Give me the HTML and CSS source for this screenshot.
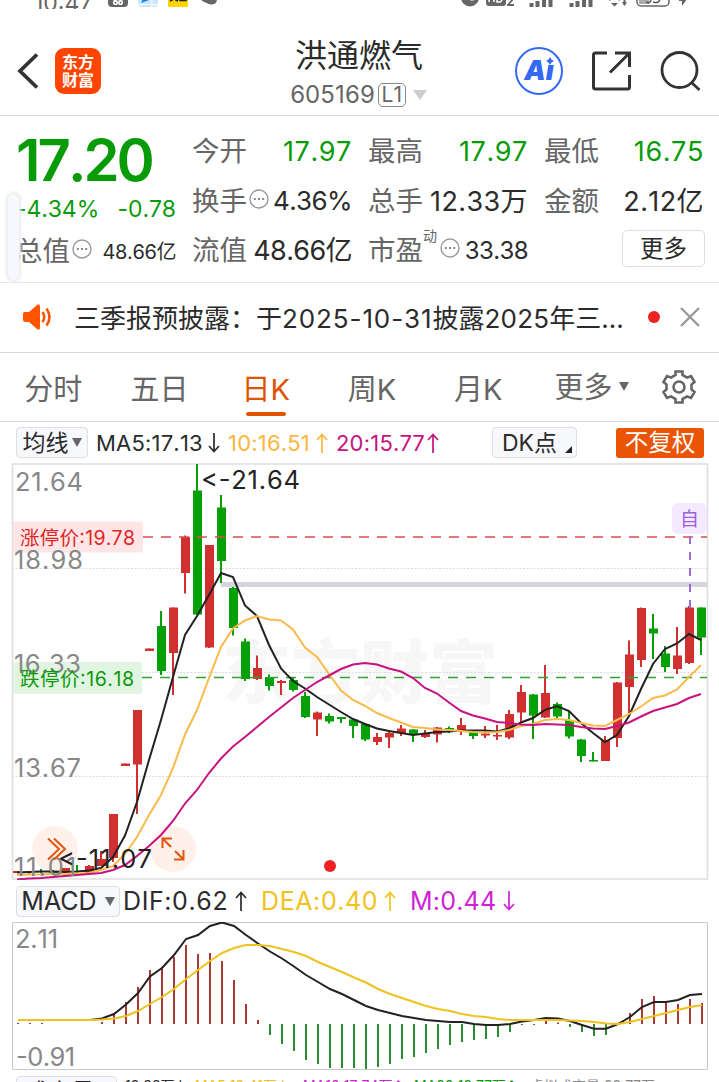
FILE: index.html
```html
<!DOCTYPE html>
<html lang="zh-CN">
  <head>
    <meta charset="UTF-8" />
    <meta name="viewport" content="width=device-width, initial-scale=1.0" />
    <title>洪通燃气 605169</title>
    <link rel="stylesheet" href="styles.css">
  </head>
  <body>
    <!-- Status bar -->
    <div class="status-bar">
      <span class="clock">10:47</span>
      <svg class="status-left" width="112" height="10" viewBox="0 0 112 10">
        <rect x="0" y="-12" width="20" height="20" rx="4" fill="#666" />
        <path d="M5 0l4 3M15 0l-4 3" stroke="#fff" stroke-width="1.500" />
        <circle cx="7.500" cy="3.500" r="1.800" fill="none" stroke="#fff" stroke-width="1.500" />
        <circle cx="12.500" cy="3.500" r="1.800" fill="none" stroke="#fff" stroke-width="1.500" />
        <rect x="30" y="-12" width="20" height="20" rx="4" fill="#cfe6fa" />
        <path d="M33 4L44 0h-9z" fill="#0a84ff" />
        <path d="M30 5.500h20M44 0v8" stroke="#fff" />
        <rect x="60" y="-12" width="20" height="20" rx="1" fill="#ffd500" />
        <path d="M62 2l4-2 4 2M72 0v1.500h6V0" fill="none" stroke="#222" stroke-width="1.500" />
        <path d="M94 0h7v5l-7-3zM97 0h12q0 5-5 5.500q-6 0-7-5.500" fill="#666" />
      </svg>
      <svg class="status-right" width="230" height="10" viewBox="0 0 230 10">
        <circle cx="10" cy="-1.500" r="9" fill="#666" />
        <path d="M10 0h4v1.500h-4z" fill="#fff" />
        <rect x="26" y="-10" width="20" height="17" rx="3" fill="#666" />
        <path d="M29 0v3M34 0v3M37 0v3h3q2-1 2-3" stroke="#fff" stroke-width="1.500" fill="none" />
        <path d="M47 6h7M53 0l-5 6" stroke="#666" stroke-width="1.800" />
        <path d="M71.500 4v4M77.500 2v6M84 0v8M90.500 0v8M111.500 4v4M117.500 2v6M124 0v8M130.500 0v8" stroke="#666" stroke-width="4" />
        <path d="M149 1q5.500-3.500 11 0M164.500 0v6" stroke="#666" stroke-width="2" fill="none" />
        <path d="M151 4h7l-3.500 3.500zM162 3h5l-2.500 4z" fill="#666" />
        <rect x="177" y="-10" width="32" height="17" rx="4" fill="none" stroke="#666" stroke-width="1.500" />
        <path d="M179 0h10v5h-10z" fill="#aaa" />
        <path d="M186 3q4 2 5-2M193 3q6 2 7-3M211 0v1" fill="none" stroke="#555" stroke-width="1.500" />
        <path d="M219 0h8l-5 7v-5h-3z" fill="#666" />
      </svg>
    </div>

    <!-- Title bar -->
    <header class="title-bar">
      <div class="title-left">
        <svg width="24" height="38" viewBox="0 0 24 38">
          <path d="M22 2.500L5 19l17 16.500" fill="none" stroke="#333" stroke-width="3.800" />
        </svg>
        <div class="logo"><span>东方</span><span>财富</span></div>
      </div>
      <div class="stock">
        <h1>洪通燃气</h1>
        <div class="stock-code">605169<span class="level">L1</span><i class="caret"></i></div>
      </div>
      <div class="title-icons">
        <div class="ai">A<i>ı</i><svg width="8" height="8" viewBox="0 0 8 8"><path d="M4 0L5.500 2.500 8 4 5.500 5.500 4 8 2.500 5.500 0 4 2.500 2.500z" fill="#3468f5" /></svg></div>
        <svg width="40" height="40" viewBox="0 0 40 40" fill="none" stroke="#333" stroke-width="3">
          <path d="M16 2H4.500Q2.500 2 2.500 4v32q0 2 2 2h32q2 0 2-2V24M24 2h14.500v14M38 2.500L19 21.500" />
        </svg>
        <svg width="42" height="42" viewBox="0 0 42 42" fill="none" stroke="#333" stroke-width="2.800">
          <circle cx="20.500" cy="20" r="17.500" />
          <path d="M32 32L40.500 40" />
        </svg>
      </div>
    </header>

    <!-- Quote -->
    <section class="quote">
      <div class="quote-main">
        <div class="price">17.20</div>
        <div class="change"><span>-4.34%</span><span>-0.78</span></div>
        <div class="cell total"><label>总值</label><svg class="dots"><use href="#dots" /></svg><b class="small">48.66亿</b></div>
      </div>
      <div class="quote-grid">
        <div class="cell"><label>今开</label><b class="green wide">17.97</b></div>
        <div class="cell"><label>最高</label><b class="green wide">17.97</b></div>
        <div class="cell"><label>最低</label><b class="green wide">16.75</b></div>
        <div class="cell"><label>换手</label><svg class="dots"><use href="#dots" /></svg><b class="rate">4.36%</b></div>
        <div class="cell"><label>总手</label><b class="unit">12.33万</b></div>
        <div class="cell"><label>金额</label><b class="unit">2.12亿</b></div>
        <div class="cell"><label>流值</label><b class="unit tight">48.66亿</b></div>
        <div class="cell"><label>市盈<sup>动</sup></label><svg class="dots"><use href="#dots" /></svg><b class="pe">33.38</b></div>
        <div class="cell"><button class="more">更多</button></div>
      </div>
      <div class="side-handle"></div>
    </section>

    <!-- Notice -->
    <section class="notice">
      <svg width="32" height="26" viewBox="0 0 32 26">
        <path d="M1 10q0-2 2-2h4l8-7q3-2 3 2v20q0 4-3 2l-8-7H3q-2 0-2-2z" fill="#ff5500" />
        <path d="M20.500 8q3.500 5 0 10M24.500 4.500q6 8.500 0 17" fill="none" stroke="#ff5500" stroke-width="2.600" />
      </svg>
      <p>三季报预披露：于<span class="date">2025-10-31</span>披露<span class="year">2025</span>年三<span class="more-dots">...</span></p>
      <i class="red-dot"></i>
      <svg class="close" width="20" height="20" viewBox="0 0 20 20">
        <path d="M1 1l18 18M19 1L1 19" stroke="#999" stroke-width="2.400" />
      </svg>
    </section>

    <!-- Period tabs -->
    <nav class="tabs">
      <a>分时</a>
      <a>五日</a>
      <a class="active">日K</a>
      <a>周K</a>
      <a>月K</a>
      <a class="tab-more">更多<i class="caret"></i></a>
      <svg class="gear" width="36" height="36" viewBox="0 0 36 36" fill="none" stroke="#666" stroke-width="2.600">
        <path d="M14.500 2.500h7v3.500l4.500 2.600 4-1.600 3.500 6-3 2.500v5l3 2.500-3.500 6-4-1.600-4.500 2.600v3.500h-7v-3.500L10 27.400l-4 1.600-3.500-6 3-2.500v-5l-3-2.500 3.500-6 4 1.600 4.500-2.600z" />
        <circle cx="18" cy="18" r="5.500" />
      </svg>
    </nav>

    <!-- K line chart -->
    <div class="ma-bar">
      <button class="pill">均线<i class="caret"></i></button>
      <span class="ma5">MA5:17.13</span><svg class="arrow ma5"><use href="#down" /></svg>
      <span class="ma10">10:16.51</span><svg class="arrow ma10"><use href="#up" /></svg>
      <span class="ma20">20:15.77</span><svg class="arrow ma20"><use href="#up" /></svg>
      <button class="pill dk">DK点<i class="corner"></i></button>
      <button class="adjust">不复权</button>
    </div>
    <svg id="kline" width="719" height="417" viewBox="0 463 719 417">
      <text class="watermark" x="222" y="698">东方财富</text>
      <path d="M12 568.500H707M12 672.500H707M12 776.500H707" stroke="#dcdcdc" stroke-dasharray="2 1.500" />
      <path d="M221 584.500H707" stroke="#d3d6de" stroke-width="5" />
      <path d="M12.500 464H707.500V879H12.500z" fill="none" stroke="#dedede" stroke-width="1.600" />
      <circle class="float" cx="55" cy="849" r="23" />
      <circle class="float" cx="173" cy="849" r="23" />
      <path d="M13 521.500H140q3 0 3 3v25q0 3-3 3H13z" fill="#ffe5e5" />
      <path d="M13 662H139q3 0 3 3v26q0 3-3 3H13z" fill="#e2f4e2" />
      <g id="candles"></g>
      <path d="M143 537H707" stroke="#d94f4f" stroke-width="1.300" stroke-dasharray="10 8" />
      <path d="M142 677.500H707" stroke="#31a331" stroke-width="1.300" stroke-dasharray="10 8" />
      <g id="averages"></g>
      <g class="axis">
        <text x="15" y="491" textLength="68">21.64</text>
        <text x="14" y="569" textLength="69">18.98</text>
        <text x="14" y="673" textLength="67">16.33</text>
        <text x="14" y="777" textLength="67">13.67</text>
        <text x="14" y="876" textLength="62">11.01</text>
      </g>
      <text class="limit up" x="20" y="545" textLength="115">涨停价:19.78</text>
      <text class="limit down" x="20" y="686" textLength="114">跌停价:16.18</text>
      <text class="extreme" x="201" y="489" textLength="99">&lt;-21.64</text>
      <text class="extreme" x="58" y="868" textLength="94">&lt;-11.07</text>
      <path d="M48 838.500l11 10.500-11 10.500M54 838.500l11 10.500-11 10.500M172 838.500h-9.500v9.500M163 839l8 8M183.500 850v9.500H174M183 859l-8-8" fill="none" stroke="#e2550e" stroke-width="2" />
      <rect x="672" y="503" width="35" height="31" rx="6" fill="#f3eaff" />
      <text class="own" x="680" y="526">自</text>
      <path d="M690 536V608" stroke="#a06bd0" stroke-width="2" stroke-dasharray="8 8" />
      <circle cx="330" cy="866" r="6" fill="#ee2222" />
    </svg>

    <!-- MACD chart -->
    <div class="macd-bar">
      <button class="pill">MACD<i class="caret"></i></button>
      <span class="dif">DIF:0.62</span><svg class="arrow"><use href="#up" /></svg>
      <span class="dea">DEA:0.40</span><svg class="arrow dea"><use href="#up" /></svg>
      <span class="m">M:0.44</span><svg class="arrow m"><use href="#down" /></svg>
    </div>
    <svg id="macd" width="719" height="148" viewBox="0 922 719 148">
      <path d="M12.500 922.500H707.500V1069.500H12.500z" fill="none" stroke="#c8c8c8" />
      <g id="bars"></g>
      <g id="macdLines"></g>
      <g class="axis">
        <text x="15" y="948" textLength="43">2.11</text>
        <text x="16" y="1066" textLength="59">-0.91</text>
      </g>
    </svg>

    <!-- Volume header, cut by the bottom edge -->
    <div class="vol-bar">
      <button class="pill">成交量<i class="caret"></i></button>
      <span>12.33万↓</span>
      <span class="dea">MA5:13.41万↓</span>
      <span class="m">MA10:17.74万↑</span>
      <span class="green">MA20:12.77万↑</span>
      <span class="virtual">虚拟成交量:22.77万</span>
    </div>

    <!-- Shared icons -->
    <svg class="defs" width="0" height="0">
      <symbol id="dots" viewBox="0 0 20 20">
        <circle cx="10" cy="10" r="9" fill="none" stroke="#999" stroke-width="1.400" />
        <path d="M4.800 10h2M9 10h2M13.200 10h2" stroke="#888" stroke-width="2" />
      </symbol>
      <symbol id="up" viewBox="0 0 12 20">
        <path d="M6 20V1.500M1 7l5-5.500L11 7" fill="none" stroke="currentColor" stroke-width="1.700" />
      </symbol>
      <symbol id="down" viewBox="0 0 12 20">
        <path d="M6 0v18.500M1 13l5 5.500 5-5.500" fill="none" stroke="currentColor" stroke-width="1.700" />
      </symbol>
    </svg>

    <script src="chart.js"></script>
  </body>
</html>
```
FILE: styles.css
```css
* {
  box-sizing: border-box;
}

body {
  margin: 0;
  width: 719px;
  height: 1082px;
  overflow: hidden;
  background-color: #fff;
  color: #2b2b2b;
  font-family: Inter, "Noto Sans CJK SC", sans-serif;
  font-kerning: none;
}

svg {
  display: block;
  flex: none;
}

button {
  font-family: inherit;
  color: inherit;
  padding: 0;
  margin: 0;
}

.defs {
  position: absolute;
}

.green {
  color: #079c07;
}

.caret {
  display: inline-block;
  border: 5px solid transparent;
  border-top: 9px solid #666;
  border-bottom: 0;
}

/* Status bar */
.status-bar {
  height: 9px;
  padding-left: 34px;
  display: flex;
  align-items: flex-end;
  overflow: hidden;
}

.clock {
  width: 74px;
  flex: none;
  font-size: 23px;
  line-height: 24px;
  height: 22px;
  margin-bottom: -4px;
  color: #666;
}

.status-right {
  margin-left: 240px;
}

/* Title bar */
.title-bar {
  height: 107px;
  border-bottom: 1px solid #d8d8d8;
  display: grid;
  grid-template-columns: 1fr 240px 1fr;
  padding: 0 17px 0 15px;
  align-items: center;
}

.title-left {
  display: flex;
  align-items: center;
  gap: 16px;
  padding-top: 17px;
}

.logo {
  width: 46px;
  height: 46px;
  border-radius: 9px;
  background-color: #ff4400;
  color: #fff;
  font-size: 16px;
  font-weight: 700;
  line-height: 18px;
  display: flex;
  flex-direction: column;
  align-items: center;
  justify-content: center;
}

.stock {
  text-align: center;
  padding-top: 23px;
}

.stock h1 {
  margin: 0 0 0 1px;
  font-size: 32px;
  font-weight: 400;
  line-height: 42px;
}

.stock-code {
  display: flex;
  align-items: center;
  justify-content: center;
  font-size: 24px;
  line-height: 35px;
  letter-spacing: 0.1px;
  color: #666;
}

.level {
  border: 1.5px solid #888;
  border-radius: 5px;
  width: 28px;
  height: 24px;
  font-size: 21px;
  line-height: 22px;
  margin-left: 3px;
}

.stock-code .caret {
  border-width: 10px 7px 0;
  border-top-color: #ccc;
  margin-left: 7px;
}

.title-icons {
  display: flex;
  align-items: center;
  justify-content: flex-end;
  gap: 28px;
  padding: 17px 1px 0 0;
}

.ai {
  position: relative;
  width: 48px;
  height: 48px;
  border: 2px solid #3468f5;
  border-radius: 50%;
  text-align: center;
  font-size: 27px;
  line-height: 44px;
  font-weight: 900;
  font-style: italic;
  color: #3468f5;
  flex: none;
}

.ai svg {
  position: absolute;
  left: 29px;
  top: 8px;
}

/* Quote */
.quote {
  position: relative;
  height: 167px;
  border-bottom: 1px solid #e6e6e6;
  display: flex;
  gap: 17px;
  padding: 10px 15px 0 16px;
}

.quote-main {
  width: 160px;
}

.price {
  height: 67px;
  font-size: 58px;
  line-height: 68px;
  font-weight: 600;
  letter-spacing: -3px;
  color: #079c07;
}

.change {
  display: flex;
  justify-content: space-between;
  height: 33px;
  font-size: 23px;
  line-height: 33px;
  letter-spacing: -0.1px;
  color: #079c07;
}

.quote-grid {
  flex: 1;
  display: grid;
  grid-template-columns: repeat(3, 159px);
  column-gap: 17px;
  grid-auto-rows: 49.7px;
}

.cell {
  display: flex;
  align-items: center;
  height: 50px;
  white-space: nowrap;
}

.cell label {
  position: relative;
  margin-top: -4px;
  margin-left: -1px;
  font-size: 27.5px;
  color: #666;
}

.cell b {
  margin-left: auto;
  font-size: 27px;
  font-weight: 400;
}

.cell .wide {
  letter-spacing: 0.6px;
}

.cell .rate {
  font-size: 26px;
  letter-spacing: -0.6px;
}

.cell .unit {
  margin-top: -3px;
  letter-spacing: 0.4px;
}

.cell .tight {
  letter-spacing: -0.6px;
}

.cell .small {
  font-size: 20px;
  letter-spacing: -0.4px;
  margin-top: -2px;
}

.cell .pe {
  font-size: 24px;
  letter-spacing: -0.6px;
}

.cell sup {
  position: absolute;
  left: 55px;
  top: 1px;
  font-size: 14px;
  line-height: 14px;
}

.dots {
  width: 20px;
  height: 20px;
  margin: -4px 0 0 2px;
}

.cell:nth-child(8) .dots {
  margin-left: 17px;
}

.more {
  width: 83px;
  height: 37px;
  margin-left: auto;
  margin-right: -1px;
  margin-top: -3px;
  border: 1px solid #ddd;
  border-radius: 5px;
  background-color: #fff;
  font-size: 23.5px;
  line-height: 32px;
}

.side-handle {
  position: absolute;
  left: 8px;
  top: 78px;
  width: 11px;
  height: 86px;
  border-radius: 6px;
  background-color: #f7f8fe;
  box-shadow: 0 0 3px 2px #ececee;
}

/* Notice */
.notice {
  height: 70px;
  border-bottom: 1px solid #d8d8d8;
  display: flex;
  align-items: center;
  padding: 0 19px 2px 22px;
}

.notice p {
  margin: -1px 0 0 20px;
  width: 574px;
  font-size: 26px;
  white-space: nowrap;
}

.date {
  letter-spacing: 0.9px;
}

.year {
  letter-spacing: 0.2px;
}

.red-dot {
  width: 12px;
  height: 12px;
  border-radius: 50%;
  background-color: #ee2222;
  flex: none;
}

.close {
  margin-left: auto;
}

/* Tabs */
.tabs {
  height: 69px;
  border-bottom: 1px solid #d8d8d8;
  display: flex;
  align-items: center;
  padding: 0 22px 0 0;
  font-size: 29px;
  color: #666;
}

.tabs a {
  width: 106.3px;
  height: 68px;
  line-height: 73px;
  display: flex;
  flex-direction: column;
  align-items: center;
}

.tabs .active {
  color: #e05300;
}

.tabs .active::after {
  content: "";
  width: 40px;
  height: 4px;
  margin-top: -14px;
  border-radius: 2px;
  background-color: #e05300;
}

.tabs .tab-more {
  flex-direction: row;
  width: 106px;
  height: 70px;
  padding-left: 23px;
  gap: 6px;
}

.tab-more .caret {
  margin-top: -2px;
}

.gear {
  margin-left: auto;
}

/* Indicator bars */
.ma-bar,
.macd-bar,
.vol-bar {
  display: flex;
  align-items: center;
  white-space: nowrap;
}

.ma-bar {
  height: 41px;
  padding: 0 15px 0 16px;
  font-size: 22px;
}

.pill {
  display: flex;
  align-items: center;
  justify-content: center;
  gap: 3px;
  flex: none;
  width: 72px;
  height: 31px;
  border: 1px solid #dcdfe4;
  border-radius: 4px;
  background-color: #f6f8fb;
  font-size: 23px;
  line-height: 28px;
  white-space: nowrap;
}

.arrow {
  width: 12px;
  height: 20px;
}

.ma-bar span {
  margin-left: 8px;
  width: 84px;
  letter-spacing: 0.2px;
}

.ma-bar span.ma5 {
  width: 108px;
}

.ma-bar span.ma20 {
  width: 87px;
}

.ma-bar .arrow {
  margin-left: 4px;
}

.ma10 {
  color: #fbb63c;
}

.ma20 {
  color: #c7137f;
}

.ma-bar .dk {
  position: relative;
  width: 85px;
  margin-left: auto;
  padding-right: 10px;
}

.corner {
  position: absolute;
  right: 4px;
  bottom: 4px;
  border-left: 7px solid transparent;
  border-bottom: 7px solid #222;
}

.adjust {
  width: 88px;
  height: 30px;
  margin-left: 39px;
  border: 0;
  border-radius: 3px;
  background-color: #e95504;
  color: #fff;
  font-size: 23.5px;
  line-height: 28px;
}

.macd-bar {
  height: 42px;
  padding-left: 16px;
  font-size: 25px;
  letter-spacing: 0.6px;
}

.macd-bar .pill {
  width: 104px;
  gap: 8px;
  font-size: 25px;
}

.macd-bar .dif {
  width: 108px;
  margin-left: 3px;
}

.macd-bar .arrow {
  margin-left: 4px;
  height: 22px;
}

.macd-bar span.dea {
  margin-left: 14px;
  width: 119px;
}

.macd-bar span.m {
  margin-left: 14px;
  width: 89px;
  letter-spacing: 0.2px;
}

.dea {
  color: #f2c21a;
}

.m {
  color: #cf22d6;
}

.vol-bar {
  display: grid;
  grid-template-columns: 109px 70px 108px 111px 116px 1fr;
  align-items: start;
  padding: 6px 0 0 16px;
  font-size: 14px;
}

.vol-bar span {
  line-height: 16px;
  padding-top: 2px;
}

.vol-bar .pill {
  width: 101px;
  font-size: 23px;
}

.virtual {
  color: #888;
}

/* Charts */
.axis {
  fill: #888;
  font-size: 25.5px;
}

.limit {
  font-size: 19.5px;
}

.limit.up {
  fill: #e02525;
}

.limit.down {
  fill: #0a9a0a;
}

.extreme {
  fill: #222;
  font-size: 25.5px;
}

.own {
  fill: #a05fd8;
  font-size: 19px;
}

.float {
  fill: #fff0e9;
}

.watermark {
  fill: #f7f7f7;
  font-size: 69px;
  font-weight: 900;
}
```
FILE: chart.js
```js
const NS = "http://www.w3.org/2000/svg";
const STEP = 12;

// high, body top, body bottom, low, r = rise / g = fall
const candles = [
  [871, 871, 873, 873, "r"], [871, 871, 873, 874, "r"], [869, 871, 872, 873, "g"],
  [870, 871, 873, 874, "g"], [868, 868, 871, 872, "r"], [865, 871, 872, 873, "g"],
  [865, 866, 874, 874, "r"], [851, 859, 866, 866, "r"], [814, 814, 858, 862, "r"],
  [763.5, 763.5, 766, 766, "r"], [710, 710, 764.5, 814, "r"], [648.5, 648.5, 651, 651, "r"],
  [611, 626, 671, 675, "g"], [607.5, 607.5, 653, 695, "r"], [535.5, 537, 573, 593.5, "r"],
  [464, 490.5, 614.5, 615, "g"], [545, 545, 647.5, 648, "r"], [495, 507.5, 561, 583, "g"],
  [587, 588, 628, 635.5, "g"], [638.5, 641.5, 679, 681, "g"], [655.5, 668, 679, 680, "r"],
  [674.5, 677, 686, 690.5, "g"], [680, 681, 683, 695, "r"], [677, 680, 690, 691.5, "g"],
  [692, 696, 717, 718, "g"], [711.5, 712.5, 719.5, 736, "r"], [713.5, 716, 721.5, 723.5, "g"],
  [717, 717, 719, 723, "g"], [719, 719.5, 726, 738, "g"], [723, 724, 739.5, 741, "g"],
  [733, 737, 742, 745, "r"], [732, 733, 737.5, 748, "r"], [725, 728.5, 733, 736, "r"],
  [729, 729.5, 735, 742, "g"], [730, 733, 737, 738, "r"], [727, 727.5, 734.5, 742.5, "r"],
  [726.5, 728, 730, 733, "g"], [718, 725, 731, 735, "r"], [731, 732, 736, 739, "g"],
  [726, 733.5, 735.5, 738, "r"], [725, 735, 736.5, 740, "r"], [710, 714, 737.5, 739, "r"],
  [685, 692, 712.5, 722, "r"], [694, 694.5, 715.5, 739, "g"], [665, 693, 717.5, 718, "r"],
  [702.5, 704, 716.5, 718, "g"], [711, 720, 736.5, 738.5, "g"], [739, 739.5, 756, 762, "g"],
  [752, 760, 761.5, 761.5, "g"], [736, 740, 761, 761, "r"], [682, 682.5, 738, 747, "r"],
  [640.5, 654.5, 687, 713, "r"], [607.5, 608, 660, 667, "r"], [614, 628.5, 633.5, 659, "g"],
  [646, 653.5, 667, 672, "g"], [627, 655.5, 669, 674, "r"], [606, 607.5, 663, 664, "r"],
  [607.5, 607.5, 637.5, 655, "g"]
];

const ma5 = [872.5, 872, 871.5, 871.5, 872, 871.5, 870.5, 868, 857, 835.5, 802, 760, 720, 677, 635, 616, 595,
  573, 577, 605.5, 616, 645, 668.5, 681, 688.5, 697, 704.5, 712, 719, 724, 728.5, 731, 733, 735, 733.5, 732,
  731.5, 730.5, 730.5, 730.5, 731.5, 728.5, 722.5, 718, 710, 706, 711, 723, 733, 742, 735, 716, 689, 664,
  649, 643.5, 634, 640];
const ma10 = [875, 874.5, 874.5, 874, 874, 873.5, 873, 870, 866, 854, 837, 815, 795, 768, 734.5, 710, 678,
  647, 628.5, 620.5, 616, 619.5, 620.5, 629.5, 647.5, 657, 674, 690.5, 700, 706, 713, 718, 722.5, 727, 728,
  729.5, 730, 731, 732, 732.5, 732, 730, 726, 724, 720, 719, 720, 723, 725.5, 726, 720, 714, 706.5, 698,
  695.5, 689.5, 677, 665];
const ma20 = [879.5, 878.5, 878, 877, 876, 875, 874, 873, 870, 865, 856, 846, 835, 821, 803.5, 790, 773,
  758.5, 746.5, 737, 727, 717, 707.5, 698, 690, 682, 675.5, 669, 664.5, 663, 664.5, 668.5, 671.5, 678, 688,
  693.5, 702.5, 711, 715.5, 718.5, 722, 723, 724.5, 725, 724, 724.5, 725, 727, 728.5, 729, 726, 722.5,
  716.5, 711, 707.5, 704, 698, 694];

const dif = [1020, 1020, 1020, 1020, 1020, 1020, 1020, 1018.5, 1014, 1004.5, 993, 976.5, 968, 955, 939, 935,
  926, 922.5, 926, 935, 943.5, 951.5, 958.5, 966.5, 975, 982, 989, 994, 1000, 1006, 1010, 1013, 1016, 1018,
  1020, 1021, 1022, 1022, 1024, 1025, 1025, 1024, 1021.5, 1020, 1018, 1018.5, 1021, 1025, 1028.7, 1028.7,
  1024, 1017, 1007, 1002, 1002, 1000, 995, 994];
const dea = [1020, 1020, 1020, 1020, 1020, 1020, 1020, 1019.5, 1018.5, 1016, 1011, 1004, 997, 989, 979, 970,
  961, 953, 948, 945, 945, 946, 949, 952, 956, 962, 967, 972, 977.5, 982.5, 989, 994, 998, 1002, 1006, 1009,
  1011, 1014, 1016, 1017, 1019, 1020, 1020, 1020, 1020, 1020, 1020.5, 1021, 1022, 1023.5, 1024, 1022, 1019,
  1016, 1013, 1010, 1007, 1005];
const bars = [1023, 1023, 1023, 1024, 1024, 1024, 1024, 1022, 1014, 1002, 970, 961, 967, 957, 945, 954,
  953, 961, 980, 1004, 1020, 1035, 1044, 1051, 1060, 1064, 1068, 1068, 1068, 1069, 1067, 1064, 1059, 1057,
  1053, 1049, 1045, 1042, 1040, 1039, 1037, 1032, 1025, 1025, 1021, 1022.5, 1027, 1032, 1036, 1035, 1024,
  1013, 999, 996, 1001, 1004, 999, 1003];
bars[10] = 987;
bars[11] = 970;

function add(parent, tag, attrs) {
  const el = document.createElementNS(NS, tag);
  for (const key in attrs) el.setAttribute(key, attrs[key]);
  document.getElementById(parent).appendChild(el);
}

function line(parent, data, startX, color) {
  const points = data.map((y, i) => `${startX + i * STEP},${y}`).join(" ");
  add(parent, "polyline", { points, fill: "none", stroke: color, "stroke-width": 2 });
}

candles.forEach(([high, top, bottom, low, type], i) => {
  const x = 17 + i * STEP;
  const fill = type === "r" ? "#d03030" : "#05a005";
  add("candles", "rect", { x: x - 1, y: high, width: 2, height: low - high, fill });
  add("candles", "rect", { x: x - 4, y: top, width: 9, height: bottom - top, fill });
});

line("averages", ma5, 17, "#222");
line("averages", ma10, 17, "#f9bb4b");
line("averages", ma20, 17, "#c7137f");

bars.forEach((y, i) => {
  if (y === 1024) return;
  const fill = y < 1024 ? "#a83a35" : "#2b8a2b";
  add("bars", "rect", { x: 17 + i * STEP, y: Math.min(y, 1024), width: 2, height: Math.abs(y - 1024), fill });
});

line("macdLines", dif, 18, "#222");
line("macdLines", dea, 18, "#efc21f");
```
